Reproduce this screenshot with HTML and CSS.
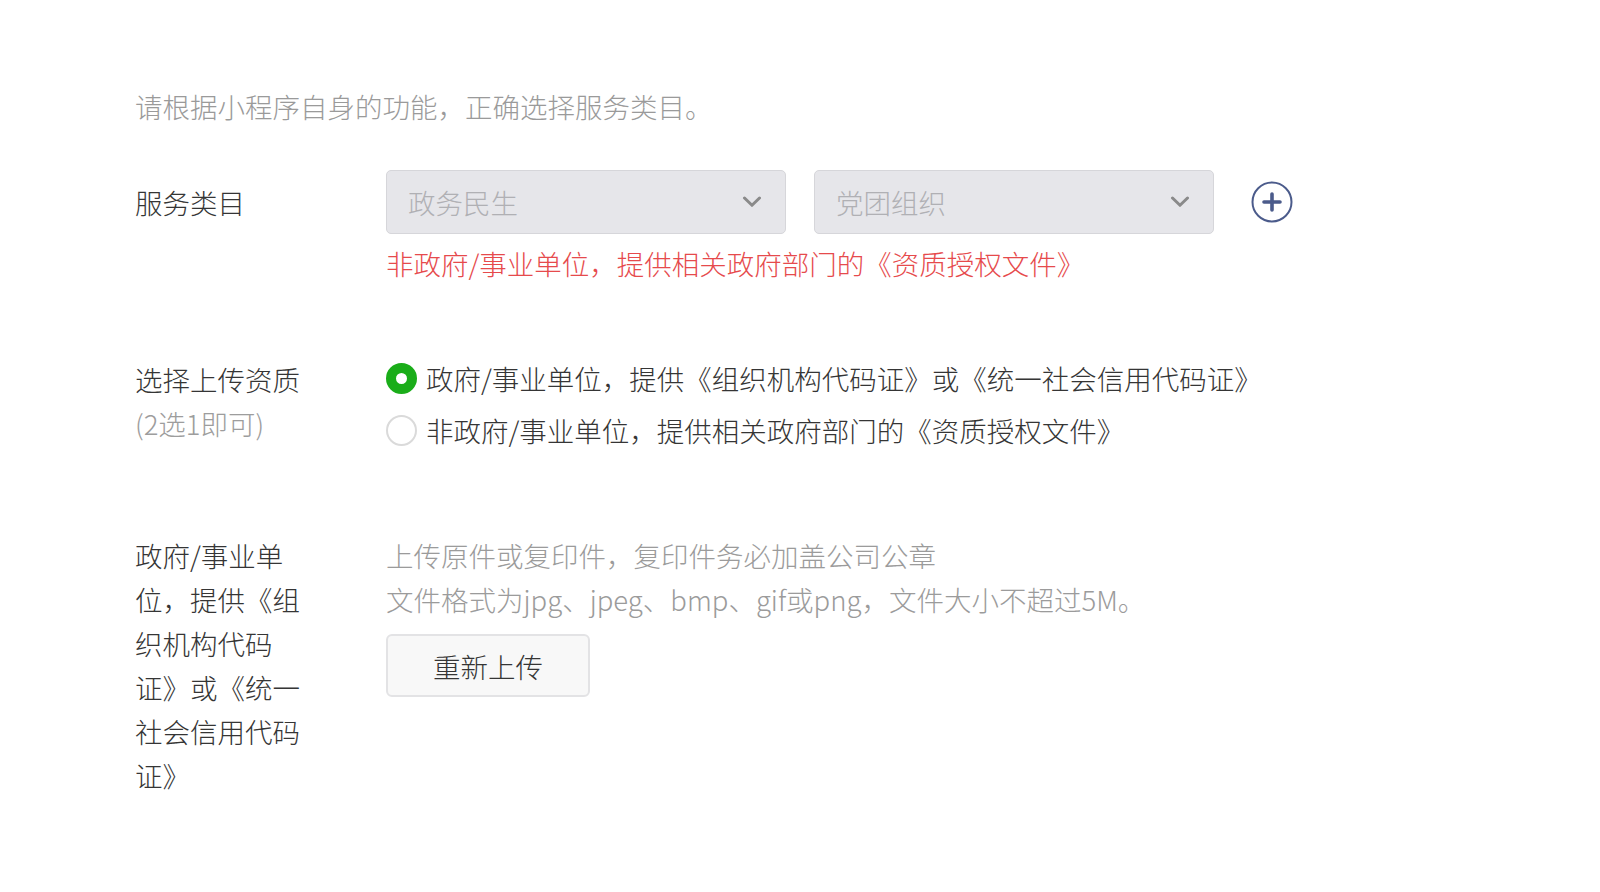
FILE: index.html
```html
<!DOCTYPE html>
<html lang="zh-CN">
<head>
<meta charset="utf-8">
<title>服务类目</title>
<link rel="stylesheet" href="styles.css">
</head>
<body>
<div class="page">
  <p class="intro">请根据小程序自身的功能，正确选择服务类目。</p>

  <div class="row row-category">
    <div class="label label-center">服务类目</div>
    <div class="content">
      <div class="selects">
        <div class="select">
          <span class="select-text">政务民生</span>
          <svg class="chevron" width="20" height="12" viewBox="0 0 20 12"><path d="M2.5 2 L10 9.3 L17.5 2" fill="none" stroke="#8a8a8a" stroke-width="3" stroke-linecap="round" stroke-linejoin="round"/></svg>
        </div>
        <div class="select">
          <span class="select-text">党团组织</span>
          <svg class="chevron" width="20" height="12" viewBox="0 0 20 12"><path d="M2.5 2 L10 9.3 L17.5 2" fill="none" stroke="#8a8a8a" stroke-width="3" stroke-linecap="round" stroke-linejoin="round"/></svg>
        </div>
        <svg class="add" width="42" height="42" viewBox="0 0 42 42"><circle cx="21" cy="21" r="19.5" fill="none" stroke="#4b5b8b" stroke-width="2"/><path d="M21 13 V29 M13 21 H29" stroke="#4b5b8b" stroke-width="3.6" stroke-linecap="round"/></svg>
      </div>
      <p class="warn">非政府/事业单位，提供相关政府部门的《资质授权文件》</p>
    </div>
  </div>

  <div class="row row-qual">
    <div class="label">选择上传资质<br><span class="sub">(2选1即可)</span></div>
    <div class="content radios">
      <label class="radio"><span class="dot dot-on"></span>政府/事业单位，提供《组织机构代码证》或《统一社会信用代码证》</label>
      <label class="radio"><span class="dot"></span>非政府/事业单位，提供相关政府部门的《资质授权文件》</label>
    </div>
  </div>

  <div class="row row-upload">
    <div class="label label-narrow">政府/事业单位，提供《组织机构代码证》或《统一社会信用代码证》</div>
    <div class="content">
      <p class="hint">上传原件或复印件，复印件务必加盖公司公章<br>文件格式为jpg、jpeg、bmp、gif或png，文件大小不超过5M。</p>
      <button class="btn" type="button">重新上传</button>
    </div>
  </div>
</div>
</body>
</html>
```

FILE: styles.css
```css
html, body {
  margin: 0;
  padding: 0;
  background: #ffffff;
}

body {
  font-family: "Noto Sans CJK SC", "Noto Sans", "Liberation Sans", sans-serif;
  font-size: 27.5px;
  font-weight: 300;
  line-height: 44px;
  color: #353535;
}

.page {
  padding: 84px 0 0 135px;
}

p {
  margin: 0;
}

.intro {
  color: #9a9a9a;
}

.row {
  display: flex;
  align-items: flex-start;
}

.label {
  width: 251px;
  flex: none;
}

.label-narrow {
  width: 170px;
  margin-right: 81px;
}

.sub {
  color: #9d9d9d;
}

.row-category {
  margin-top: 42px;
}

.label-center {
  line-height: 64px;
}

.selects {
  display: flex;
  align-items: center;
  gap: 28px;
}

.select {
  width: 400px;
  height: 64px;
  box-sizing: border-box;
  background: #e6e6ea;
  border: 1px solid #d6d6da;
  border-radius: 5px;
  display: flex;
  align-items: center;
  justify-content: space-between;
  padding: 0 23px 0 21px;
}

.select-text {
  color: #b0b0b4;
}

.add {
  margin-left: 9px;
}

.warn {
  margin-top: 7px;
  color: #e64a4c;
}

.row-qual {
  margin-top: 72px;
}

.radios {
  display: flex;
  flex-direction: column;
  gap: 8px;
  margin-top: -1px;
}

.radio {
  display: flex;
  align-items: center;
  height: 44px;
}

.dot {
  width: 31px;
  height: 31px;
  box-sizing: border-box;
  border-radius: 50%;
  border: 2px solid #dadada;
  margin-right: 9px;
  flex: none;
}

.dot-on {
  border: 10px solid #1aad19;
}

.row-upload {
  margin-top: 81px;
}

.hint {
  color: #9b9b9b;
}

.btn {
  margin-top: 13px;
  width: 204px;
  height: 63px;
  box-sizing: border-box;
  background: #f8f8f8;
  border: 2px solid #e3e3e5;
  border-radius: 6px;
  font-family: inherit;
  font-size: 27.5px;
  font-weight: 300;
  color: #353535;
  padding: 0;
  cursor: pointer;
}
```
